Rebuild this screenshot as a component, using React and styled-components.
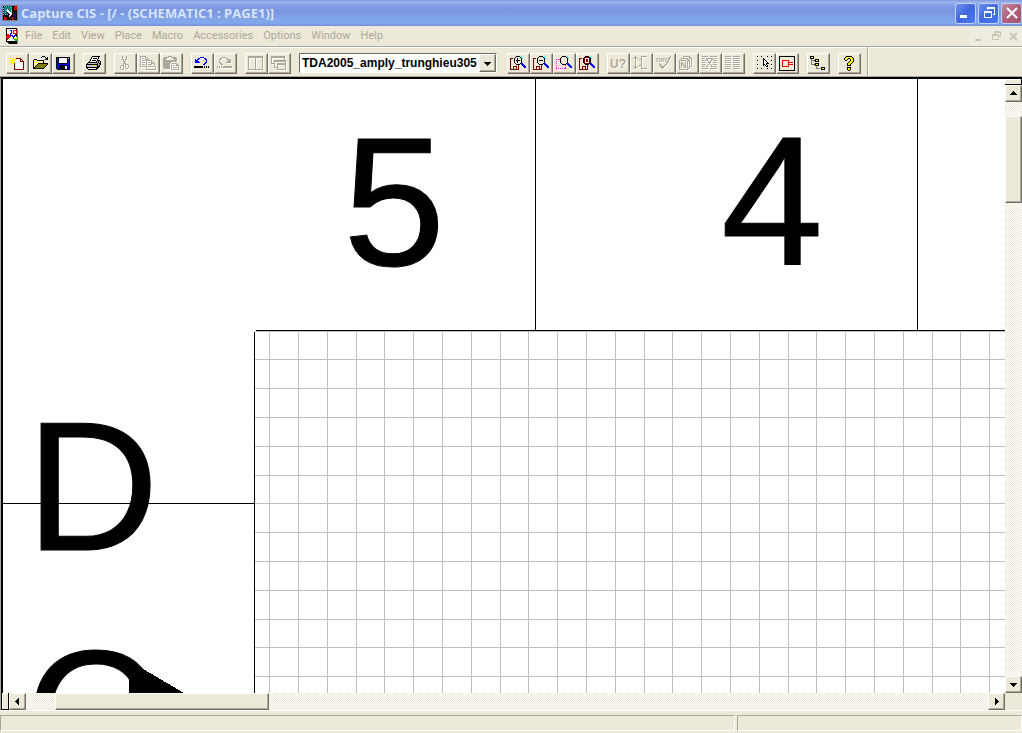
import React from "react";
import styled, { createGlobalStyle, css } from "styled-components";

const c = {
  face: "#ece9d8",
  light: "#ffffff",
  shade: "#aca899",
  dark: "#716f64",
};

const Global = createGlobalStyle`
  * { box-sizing: border-box; }
  html, body, #root { height: 100%; margin: 0; }
  body { background: ${c.face}; font-family: "Noto Sans", "Liberation Sans", sans-serif; font-size: 11px; overflow: hidden; }
  button { padding: 0; margin: 0; font: inherit; }
`;

/* ---------- pixel icons ---------- */

const ink = {
  k: "#000000", w: "#ffffff", y: "#ffff00", o: "#808000", r: "#800000", R: "#ff0000",
  b: "#0000ff", n: "#000080", g: "#aca899", c: "#00ffff", m: "#ff00ff", s: "#c0c0c0",
  t: "#008080", G: "#00c000", d: "#808080",
};

const art = {
  app: [
    "dddddddddddddddd",
    "dkckckckckkkkRRd",
    "dktttttttckkRRRd",
    "dcttttttttkkRkRd",
    "dktttwtttckkRRRd",
    "dcttcwwttckkkkkd",
    "dktttwwwtckkkkkd",
    "dctttkwwwckkkkkd",
    "dktttkkwwwkbbbkd",
    "dckckckkwwkbkbkd",
    "dkkkkkkwwkkbkbkd",
    "dkkkkkkwkkkkkbkd",
    "dkRRkkkkkkRRkbkd",
    "dkRRRkkkkRkkkbkd",
    "dkRRkkkkkkRRkkkd",
    "dddddddddddddddd",
  ],
  doc: [
    "kkkkkkkkkkk ",
    "kwwwwwwwwwkd",
    "kwwwbbwRRRRd",
    "kwwwwbwRwwRd",
    "kwwwwbwRwwRd",
    "kwwwbbwRRRRd",
    "kRRwbwwwwbkd",
    "kRRRbbbwbbkd",
    "RRRRRwbbbwkd",
    "RRRRwwwbwyyd",
    "kRRwwwwbyyyd",
    "kRwwwwwwGGGd",
    "kwwwwwwwwGGd",
    "kkkkkkkkkkkd",
    " dkkkkkkkkkd",
    "  dkkkkkkkkd",
  ],
  fresh: [
    "    y           ",
    "y   y  y        ",
    " y  y yrrrrr    ",
    "  yyyy wwwwrr   ",
    "yyyyyyy wwwrwr  ",
    "  yyy  wwwwrrrr ",
    " y y y wwwwwwwr ",
    "y  y rywwwwwwwr ",
    "   y rwwwwwwwwr ",
    "     rwwwwwwwwr ",
    "     rwwwwwwwwr ",
    "     rwwwwwwwwr ",
    "     rwwwwwwwwr ",
    "     rrrrrrrrrr ",
  ],
  open: [
    "          kkk   ",
    "         k   k k",
    "              kk",
    "  kkk        kkk",
    " kywykkkkkkk    ",
    " kwywywywywk    ",
    " kywywywywyk    ",
    " kwyw kkkkkkkkkk",
    " kyw koooooooook",
    " kwykoooooooook ",
    " kykoooooooook  ",
    " kkoooooooook   ",
    " kkkkkkkkkkk    ",
  ],
  save: [
    "",
    " kkkkkkkkkkkkkk",
    " kbkwwwwwwwwkwk",
    " kbkwwwwwwwwkkk",
    " kbkwwwwwwwwkbk",
    " kbkwwwwwwwwkbk",
    " kbkwwwwwwwwkbk",
    " kbbkkkkkkkkbbk",
    " kbbbbbbbbbbbbk",
    " kbbkkkkkkkkkbk",
    " kbbkkkkkkwwkbk",
    " kbbkkkkkkwwkbk",
    " kbbkkkkkkwwkbk",
    "  kkkkkkkkkkkkk",
  ],
  print: [
    "      kkkkkkkk  ",
    "     kwwwwwwk   ",
    "     kwkkkkwk   ",
    "    kwwwwwwk    ",
    "    kwkkkkwkkk  ",
    "   kwwwwwwksksk ",
    "  kkkkkkkkksksk ",
    " kssssssssskskk ",
    "kkkkkkkkkkkksdk ",
    "kssssssyyyskdk  ",
    "ksssssssssskkk  ",
    "kkkkkkkkkkkkk   ",
    " kwwwwwwwwkk    ",
    "  kkkkkkkkk     ",
  ],
  cut: [
    "     g   g",
    "     g   g",
    "     g   g",
    "     gg gg",
    "      g g",
    "      ggg",
    "       g",
    "      ggg",
    "      g ggg",
    "    ggg g  g",
    "   g  g g  g",
    "   g  g g  g",
    "   g  g  gg",
    "    gg",
  ],
  copy: [
    "gggggg",
    "g    gg",
    "g gg g g",
    "g    gggg",
    "g ggg gggggg",
    "g     g    gg",
    "g ggg g gg g g",
    "g     g    gggg",
    "g ggg g gggg  g",
    "g     g       g",
    "ggggggg gggggg g",
    "      g        g",
    "      g        g",
    "      gggggggggg",
  ],
  paste: [
    "     gggg",
    " ggggg  ggggg",
    "gggg      gggg",
    "ggg        ggg",
    "gggggggggggggg",
    "gggggggggggggg",
    "gggggggg",
    "ggggggg gggggg",
    "ggggggg g    gg",
    "ggggggg g gg ggg",
    "ggggggg g      g",
    "ggggggg g gggg g",
    " gggggg g      g",
    "        gggggggg",
  ],
  undo: [
    "",
    "      bbbb",
    "    bb    bb",
    " b bb      bb",
    " bbb        b",
    " bbbb       b",
    " bbbbb     bb",
    "          bb",
    "         bb",
    "",
    "kkkkkkkkk k k k",
    "kkkkkkkkk k k k",
  ],
  redo: [
    "",
    "     gggg",
    "   gg    gg",
    "  gg      gg g",
    "  g        ggg",
    "  g       gggg",
    "  gg     ggggg",
    "   gg",
    "    gg",
    "",
    "g g g ggggggggg",
    "g g g ggggggggg",
  ],
  split: [
    "ggggggggggggggg",
    "ggggggggggggggg",
    "g      g      g",
    "g      g      g",
    "g      g      g",
    "g      g      g",
    "g      g      g",
    "g      g      g",
    "g      g      g",
    "g      g      g",
    "g      g      g",
    "g      g      g",
    "g      g      g",
    "ggggggggggggggg",
  ],
  cascade: [
    "gggggggggggggg",
    "gggggggggggggg",
    "g            g",
    "g            g",
    "g  gggggggggggg",
    "g  gggggggggggg",
    "g  g          g",
    "gggg  ggggggggg",
    "   g  ggggggggg",
    "   g  g       g",
    "   g  g       g",
    "   gggg       g",
    "      g       g",
    "      ggggggggg",
  ],
  zoomIn: [
    "      kkkk c",
    "     k    kc",
    "rrr k  k   kc",
    "r   k  k   k",
    "r   k kkkk k",
    "r   k  k   k",
    "r   k  k   k",
    "r    k    kbb",
    "r     kkkk bbb",
    "r       r   bbb",
    "r  rrrr r    bbb",
    "r  r  r r     bb",
    "r  r  r r",
    "rrrrrrrrr",
  ],
  zoomOut: [
    "      kkkk c",
    "     k    kc",
    "rrr k      kc",
    "r   k      k",
    "r   k kkkk k",
    "r   k      k",
    "r   k      k",
    "r    k    kbb",
    "r     kkkk bbb",
    "r       r   bbb",
    "r  rrrr r    bbb",
    "r  r  r r     bb",
    "r  r  r r",
    "rrrrrrrrr",
  ],
  zoomArea: [
    "      kkkk c",
    "     k    kc",
    "    k      kc",
    "m mmk      k",
    "    k      k",
    "m   k      k",
    "    k      k",
    "m    k    kbb",
    "      kkkk bbb",
    "m        m  bbb",
    "             bbb",
    "m        m    bb",
    "m m m m mm",
  ],
  zoomAll: [
    "      kkkk c",
    "     krrrrkc",
    "rrr kr    rkc",
    "r   kr rr rk",
    "r   kr rr rk",
    "r   kr rr rk",
    "r   kr    rk",
    "r    krrrrkbb",
    "r     kkkk bbb",
    "r       r   bbb",
    "r  rrrr r    bbb",
    "r  r  r r     bb",
    "r  r  r r",
    "rrrrrrrrr",
  ],
  gate: [
    "  g     gggggg",
    " ggg    g",
    "g g g   g",
    "  g   ggg",
    "  g     g",
    "  g     g",
    "  g     g",
    "  g     g",
    "  g     g",
    "  g   ggg",
    "g g g   g",
    " ggg    g",
    "  g     gggggg",
  ],
  check: [
    "              g",
    "             gg",
    "             g",
    "            gg",
    "            g",
    "           gg",
    "          gg",
    "   g      g",
    "   gg    gg",
    "    gg  gg",
    "    ggggg",
    "     ggg",
    "      g",
  ],
  sheets: [
    "    ggggggg",
    "    g     gg",
    "  ggggggg ggg",
    "  g     gg  g",
    "gggggggg gg g",
    "g       g g g",
    "g       g g g",
    "g       g g g",
    "g       g g g",
    "g       g g g",
    "g       g ggg",
    "g       g g",
    "g       ggg",
    "ggggggggg",
  ],
  cross: [
    "gggggg  ggggggg",
    "",
    "ggg ggggggg ggg",
    "    gg   gg",
    "gggg g   g gggg",
    "      g g",
    "gggg  ggg  gggg",
    "       g",
    "gggg  g g  gggg",
    "     g   g",
    "ggg gg   gg ggg",
    "",
    "gggggg  ggggggg",
  ],
  list: [
    "gggggg  ggggggg",
    "",
    "gggggg  ggggggg",
    "",
    "gggggg  ggggggg",
    "",
    "gggggg  ggggggg",
    "",
    "gggggg  ggggggg",
    "",
    "gggggg  ggggggg",
    "",
    "gggggg  ggggggg",
  ],
  snap: [
    " k   k     k   k",
    "",
    "       k",
    "       kk",
    " k     kwk     k",
    "       kwwk",
    "       kwwwk",
    "       kwwkkk",
    " k     kkwk    k",
    "       k kwk",
    "          kk",
    "",
    " k   k     k   k",
  ],
  part: [
    "kkkkkkkkkkkkkkkk",
    "k              k",
    "k              k",
    "k              k",
    "k  RRRRRRR     k",
    "k  R     R     k",
    "k  R     RRRRR k",
    "k  R     R     k",
    "k  R     RRRRR k",
    "k  R     R     k",
    "k  RRRRRRR     k",
    "k              k",
    "k              k",
    "k              k",
    "kkkkkkkkkkkkkkkk",
  ],
  tree: [
    "kkkk",
    "kyyk",
    "kkkk",
    " d   kkkk",
    " dddkkyyk",
    " d   kkkk",
    " d",
    " d   kkkk",
    " dddkkyyk",
    "     kkkk",
    "      d",
    "      d    kkkk",
    "      dddd kyyk",
    "           kkkk",
  ],
  help: [
    "     kkkkkk",
    "    kyyyyyyk",
    "   kyyykkyyyk",
    "   kyyk  kyyk",
    "    kk   kyyk",
    "        kyyyk",
    "       kyyyk",
    "      kyyyk",
    "      kyyk",
    "      kkkk",
    "",
    "      kkkk",
    "      kyyk",
    "      kyyk",
    "       kk",
  ],
};

function runs(rows) {
  const out = {};
  rows.forEach((row, y) => {
    let x = 0;
    while (x < row.length) {
      const k = row[x];
      let e = x;
      while (row[e] === k) e += 1;
      if (k !== " ") out[k] = `${out[k] || ""}M${x} ${y}h${e - x}v1h${x - e}z`;
      x = e;
    }
  });
  return out;
}

const IconSvg = styled.svg`
  display: block;
  flex: none;
  shape-rendering: crispEdges;
`;

const IconText = styled.text`
  font-family: "Liberation Sans", sans-serif;
  font-weight: bold;
  font-size: ${(p) => p.$size}px;
`;

function Pixels({ name, text, off, w = 18, h = 16 }) {
  const layers = name ? Object.entries(runs(art[name])) : [];
  const label = (fill, d) =>
    text && (
      <IconText x={text.x + d} y={text.y + d} $size={text.size} fill={fill}>
        {text.s}
      </IconText>
    );
  return (
    <IconSvg width={w} height={h} aria-hidden="true">
      {off && (
        <g transform="translate(1 1)">
          {layers.map(([k, d]) => <path key={k} d={d} fill="#fff" />)}
        </g>
      )}
      {off && label("#fff", 1)}
      {layers.map(([k, d]) => <path key={k} d={d} fill={ink[k]} />)}
      {label(off ? c.shade : "#000", 0)}
    </IconSvg>
  );
}

/* ---------- frame ---------- */

const Window = styled.div`
  display: flex;
  flex-direction: column;
  height: 100vh;
  background: ${c.face};
`;

const TitleBar = styled.header`
  display: flex;
  align-items: center;
  flex: none;
  height: 26px;
  padding: 0 0 0 2px;
  gap: 3px;
  background: linear-gradient(#7c97dc 0, #9fb6ee 2px, #7f9be3 6px, #7a96df 11px, #82a6ea 20px, #84a8ec 23px, #768fd8 26px);
`;

const Title = styled.h1`
  flex: 1;
  margin: 0;
  color: #d8e4f8;
  font: bold 13px/18px "Open Sans", "Noto Sans", sans-serif;
  white-space: nowrap;
`;

const CaptionButtons = styled.div`
  display: flex;
  gap: 2px;
`;

const CaptionButton = styled.button`
  display: grid;
  place-items: center;
  width: 21px;
  height: 21px;
  border: 1px solid #c3d1f6;
  border-radius: 3px;
  background: ${(p) => (p.$close ? "linear-gradient(135deg, #c08ba0, #b0607a 50%, #a4566e)" : "linear-gradient(135deg, #6f90ec, #3f68e0 50%, #4a7af0)")};
`;

const MenuBar = styled.nav`
  display: flex;
  align-items: center;
  flex: none;
  height: 20px;
  padding-left: 6px;
`;

const MenuIcon = styled.div`
  margin-right: 2px;
`;

const MenuItems = styled.div`
  display: flex;
  flex: 1;
`;

const MenuButton = styled.button`
  border: 0;
  padding: 0 5px;
  background: none;
  color: ${c.shade};
  font: 11px/16px Roboto, "Liberation Sans", sans-serif;
`;

const ChildButtons = styled.div`
  display: flex;
  gap: 1px;
`;

const ChildButton = styled.button`
  display: grid;
  place-items: center;
  width: 17px;
  height: 17px;
  border: 0;
  background: #efece0;
`;

const ToolBar = styled.div`
  display: flex;
  flex: none;
  height: 31px;
  border-top: 1px solid ${c.shade};
  border-bottom: 1px solid ${c.shade};
  box-shadow: inset 0 1px 0 ${c.light};
`;

const ToolBand = styled.div`
  display: flex;
  align-items: center;
  gap: 8px;
  padding: 3px 6px 0;
  border-right: 1px solid ${c.shade};
  box-shadow: 1px 0 0 ${c.light};
`;

const ToolGroup = styled.div`
  display: flex;
`;

const raised = css`
  border: 1px solid;
  border-color: ${c.light} ${c.dark} ${c.dark} ${c.light};
  box-shadow: inset -1px -1px 0 ${c.shade};
  background: ${c.face};
`;

const ToolButton = styled.button`
  ${raised}
  display: flex;
  width: 23px;
  height: 21px;
  padding: 2px 0 0 2px;
`;

const Combo = styled.div`
  display: grid;
  width: 198px;
  height: 20px;
  margin-right: 2px;
  border: 1px solid;
  border-color: ${c.dark} ${c.light} ${c.light} ${c.dark};
  background: #fff;
`;

const ComboSelect = styled.select`
  grid-area: 1 / 1;
  width: 100%;
  min-width: 0;
  appearance: none;
  border: 0;
  padding: 0 18px 0 2px;
  background: #fff;
  color: #000;
  font: bold 12px/16px "Liberation Sans", sans-serif;
`;

const ComboArrow = styled.span`
  ${raised}
  grid-area: 1 / 1;
  justify-self: end;
  display: grid;
  place-items: center;
  width: 17px;
  pointer-events: none;
`;

/* ---------- document area ---------- */

const DocArea = styled.main`
  display: grid;
  flex: 1;
  min-height: 0;
  grid-template: minmax(0, 1fr) 17px / minmax(0, 1fr) 17px;
  border-top: 2px solid #000;
  border-left: 1px solid ${c.shade};
`;

const Sheet = styled.svg`
  display: block;
  width: 100%;
  height: 100%;
  border-left: 2px solid #000;
  background: #fff;
  shape-rendering: crispEdges;
`;

const SheetText = styled.text`
  font-family: "Liberation Sans", Arial, sans-serif;
  font-size: 184px;
  stroke: #000;
  stroke-width: 1px;
`;

const ScrollBar = styled.div`
  display: flex;
  flex-direction: ${(p) => (p.$vertical ? "column" : "row")};
  min-width: 0;
  min-height: 0;
  background: repeating-conic-gradient(#ffffff 0 25%, ${c.face} 0 50%) 0 0 / 2px 2px;
`;

const ScrollButton = styled.button`
  ${raised}
  display: grid;
  place-items: center;
  flex: none;
  width: 17px;
  height: 17px;
`;

const Splitter = styled.div`
  flex: none;
  background: ${c.face};
  border: solid #000;
  ${(p) => (p.$vertical
    ? "height: 6px; border-width: 0 1px 1px 0; box-shadow: inset 1px 1px 0 #fff;"
    : "width: 8px; border-width: 0 1px 1px 1px; box-shadow: inset 1px 1px 0 #fff;")}
`;

const Space = styled.div`
  flex: ${(p) => p.$grow} 0 0;
`;

const Thumb = styled.div`
  ${raised}
  flex: ${(p) => p.$grow} 0 0;
`;

const Corner = styled.div`
  background: ${c.face};
`;

const StatusBar = styled.footer`
  display: flex;
  flex: none;
  gap: 2px;
  height: 23px;
  padding: 4px 0 2px;
  border-top: 1px solid ${c.light};
`;

const StatusPane = styled.div`
  flex: ${(p) => p.$grow} 0 0;
  border: 1px solid;
  border-color: ${c.shade} ${c.light} ${c.light} ${c.shade};
`;

const Glyph = ({ d, fill = "#000", size = 9 }) => (
  <IconSvg width={size} height={size} aria-hidden="true">
    <path d={d} fill={fill} />
  </IconSvg>
);

const arrow = {
  up: "M4 2h1v1h-1zM3 3h3v1h-3zM2 4h5v1h-5zM1 5h7v1h-7z",
  down: "M1 3h7v1h-7zM2 4h5v1h-5zM3 5h3v1h-3zM4 6h1v1h-1z",
  left: "M2 4h1v1h-1zM3 3h1v3h-1zM4 2h1v5h-1zM5 1h1v7h-1z",
  right: "M3 1h1v7h-1zM4 2h1v5h-1zM5 3h1v3h-1zM6 4h1v1h-1z",
};

const minimise = "M1 9h7v3h-7z";
const restore = "M5 1h8v8h-2v-1h1v-5h-6v1h-1zM2 5h8v7h-8zM3 7v4h6v-4z";

const Cross = ({ color, size, width }) => (
  <svg width={size} height={size} aria-hidden="true">
    <path d={`M2 2L${size - 2} ${size - 2}M${size - 2} 2L2 ${size - 2}`} stroke={color} strokeWidth={width} />
  </svg>
);

const menus = ["File", "Edit", "View", "Place", "Macro", "Accessories", "Options", "Window", "Help"];

const toolsLeft = [
  [["New", "fresh"], ["Open", "open"], ["Save", "save"]],
  [["Print", "print"]],
  [["Cut", "cut", true], ["Copy", "copy", true], ["Paste", "paste", true]],
  [["Undo", "undo"], ["Redo", "redo", true]],
  [["Tile", "split", true], ["Cascade", "cascade", true]],
];

const toolsRight = [
  [["Zoom in", "zoomIn"], ["Zoom out", "zoomOut"], ["Zoom to region", "zoomArea"], ["Zoom to all", "zoomAll"]],
  [
    ["Annotate", null, true, { s: "U?", x: 0, y: 12, size: 12 }],
    ["Back annotate", "gate", true],
    ["Design rules check", "check", true, { s: "DRC", x: 0, y: 6, size: 6 }],
    ["Create netlist", "sheets", true, { s: "N", x: 1, y: 12, size: 9 }],
    ["Cross reference", "cross", true],
    ["Bill of materials", "list", true],
  ],
  [["Snap to grid", "snap"], ["Place part", "part"]],
  [["Project manager", "tree"]],
  [["Help", "help"]],
];

const Tools = ({ groups }) =>
  groups.map((group) => (
    <ToolGroup key={group[0][0]}>
      {group.map(([label, name, off, text]) => (
        <ToolButton key={label} type="button" aria-label={label} disabled={off}>
          <Pixels name={name} off={off} text={text} />
        </ToolButton>
      ))}
    </ToolGroup>
  ));

const GRID = 28.8;
const gridLines = Array.from({ length: 120 }, (_, i) => i);
const verticals = gridLines.map((i) => `M${Math.floor(266.6 + i * GRID)} 252h1v4000h-1z`).join("");
const horizontals = gridLines.map((i) => `M252 ${Math.floor(252 + i * GRID)}h4000v1h-4000z`).join("");

const Schematic = () => (
  <Sheet role="img" aria-label="Schematic page">
    <path d={verticals + horizontals} fill="#c0c0c0" />
    <path d="M532 0h1v251h-1zM914 0h1v251h-1zM253 251h4000v1h-4000zM251 253h1v4000h-1zM0 424h251v1h-251z" />
    <SheetText x="340" y="186">5</SheetText>
    <SheetText x="718" y="186">4</SheetText>
    <SheetText x="23" y="471">D</SheetText>
    <SheetText x="22" y="699">C</SheetText>
    <path d="M126 590L130 584L181 614L181 640L126 640z" />
  </Sheet>
);

export default function App() {
  return (
    <>
      <Global />
      <Window>
        <TitleBar>
          <Pixels name="app" w={16} h={16} />
          <Title>Capture CIS - [/ - (SCHEMATIC1 : PAGE1)]</Title>
          <CaptionButtons>
            <CaptionButton type="button" aria-label="Minimize"><Glyph d={minimise} fill="#fff" size={14} /></CaptionButton>
            <CaptionButton type="button" aria-label="Restore"><Glyph d={restore} fill="#fff" size={14} /></CaptionButton>
            <CaptionButton type="button" aria-label="Close" $close><Cross color="#fff" size={14} width={2} /></CaptionButton>
          </CaptionButtons>
        </TitleBar>
        <MenuBar>
          <MenuIcon><Pixels name="doc" w={12} h={16} /></MenuIcon>
          <MenuItems>
            {menus.map((m) => <MenuButton key={m} type="button">{m}</MenuButton>)}
          </MenuItems>
          <ChildButtons>
            <ChildButton type="button" aria-label="Minimize page"><Glyph d="M4 9h6v2h-6z" fill="#c9c6b8" size={13} /></ChildButton>
            <ChildButton type="button" aria-label="Restore page">
              <Glyph d="M5 1h7v6h-2v-1h1v-3h-5v1h-1zM3 4h7v6h-7zM4 6v3h5v-3z" fill="#c9c6b8" size={13} />
            </ChildButton>
            <ChildButton type="button" aria-label="Close page"><Cross color="#c9c6b8" size={11} width={2} /></ChildButton>
          </ChildButtons>
        </MenuBar>
        <ToolBar>
          <ToolBand>
            <Tools groups={toolsLeft} />
            <Combo>
              <ComboSelect aria-label="Part" defaultValue="a">
                <option value="a">TDA2005_amply_trunghieu305</option>
              </ComboSelect>
              <ComboArrow><Glyph d={arrow.down} /></ComboArrow>
            </Combo>
            <Tools groups={toolsRight} />
          </ToolBand>
        </ToolBar>
        <DocArea>
          <Schematic />
          <ScrollBar $vertical>
            <Splitter $vertical />
            <ScrollButton type="button" aria-label="Scroll up"><Glyph d={arrow.up} /></ScrollButton>
            <Space $grow={14} />
            <Thumb $grow={85} />
            <Space $grow={475} />
            <ScrollButton type="button" aria-label="Scroll down"><Glyph d={arrow.down} /></ScrollButton>
          </ScrollBar>
          <ScrollBar>
            <Splitter />
            <ScrollButton type="button" aria-label="Scroll left"><Glyph d={arrow.left} /></ScrollButton>
            <Space $grow={29} />
            <Thumb $grow={212} />
            <Space $grow={721} />
            <ScrollButton type="button" aria-label="Scroll right"><Glyph d={arrow.right} /></ScrollButton>
          </ScrollBar>
          <Corner />
        </DocArea>
        <StatusBar>
          <StatusPane $grow={736} />
          <StatusPane $grow={284} />
        </StatusBar>
      </Window>
    </>
  );
}
